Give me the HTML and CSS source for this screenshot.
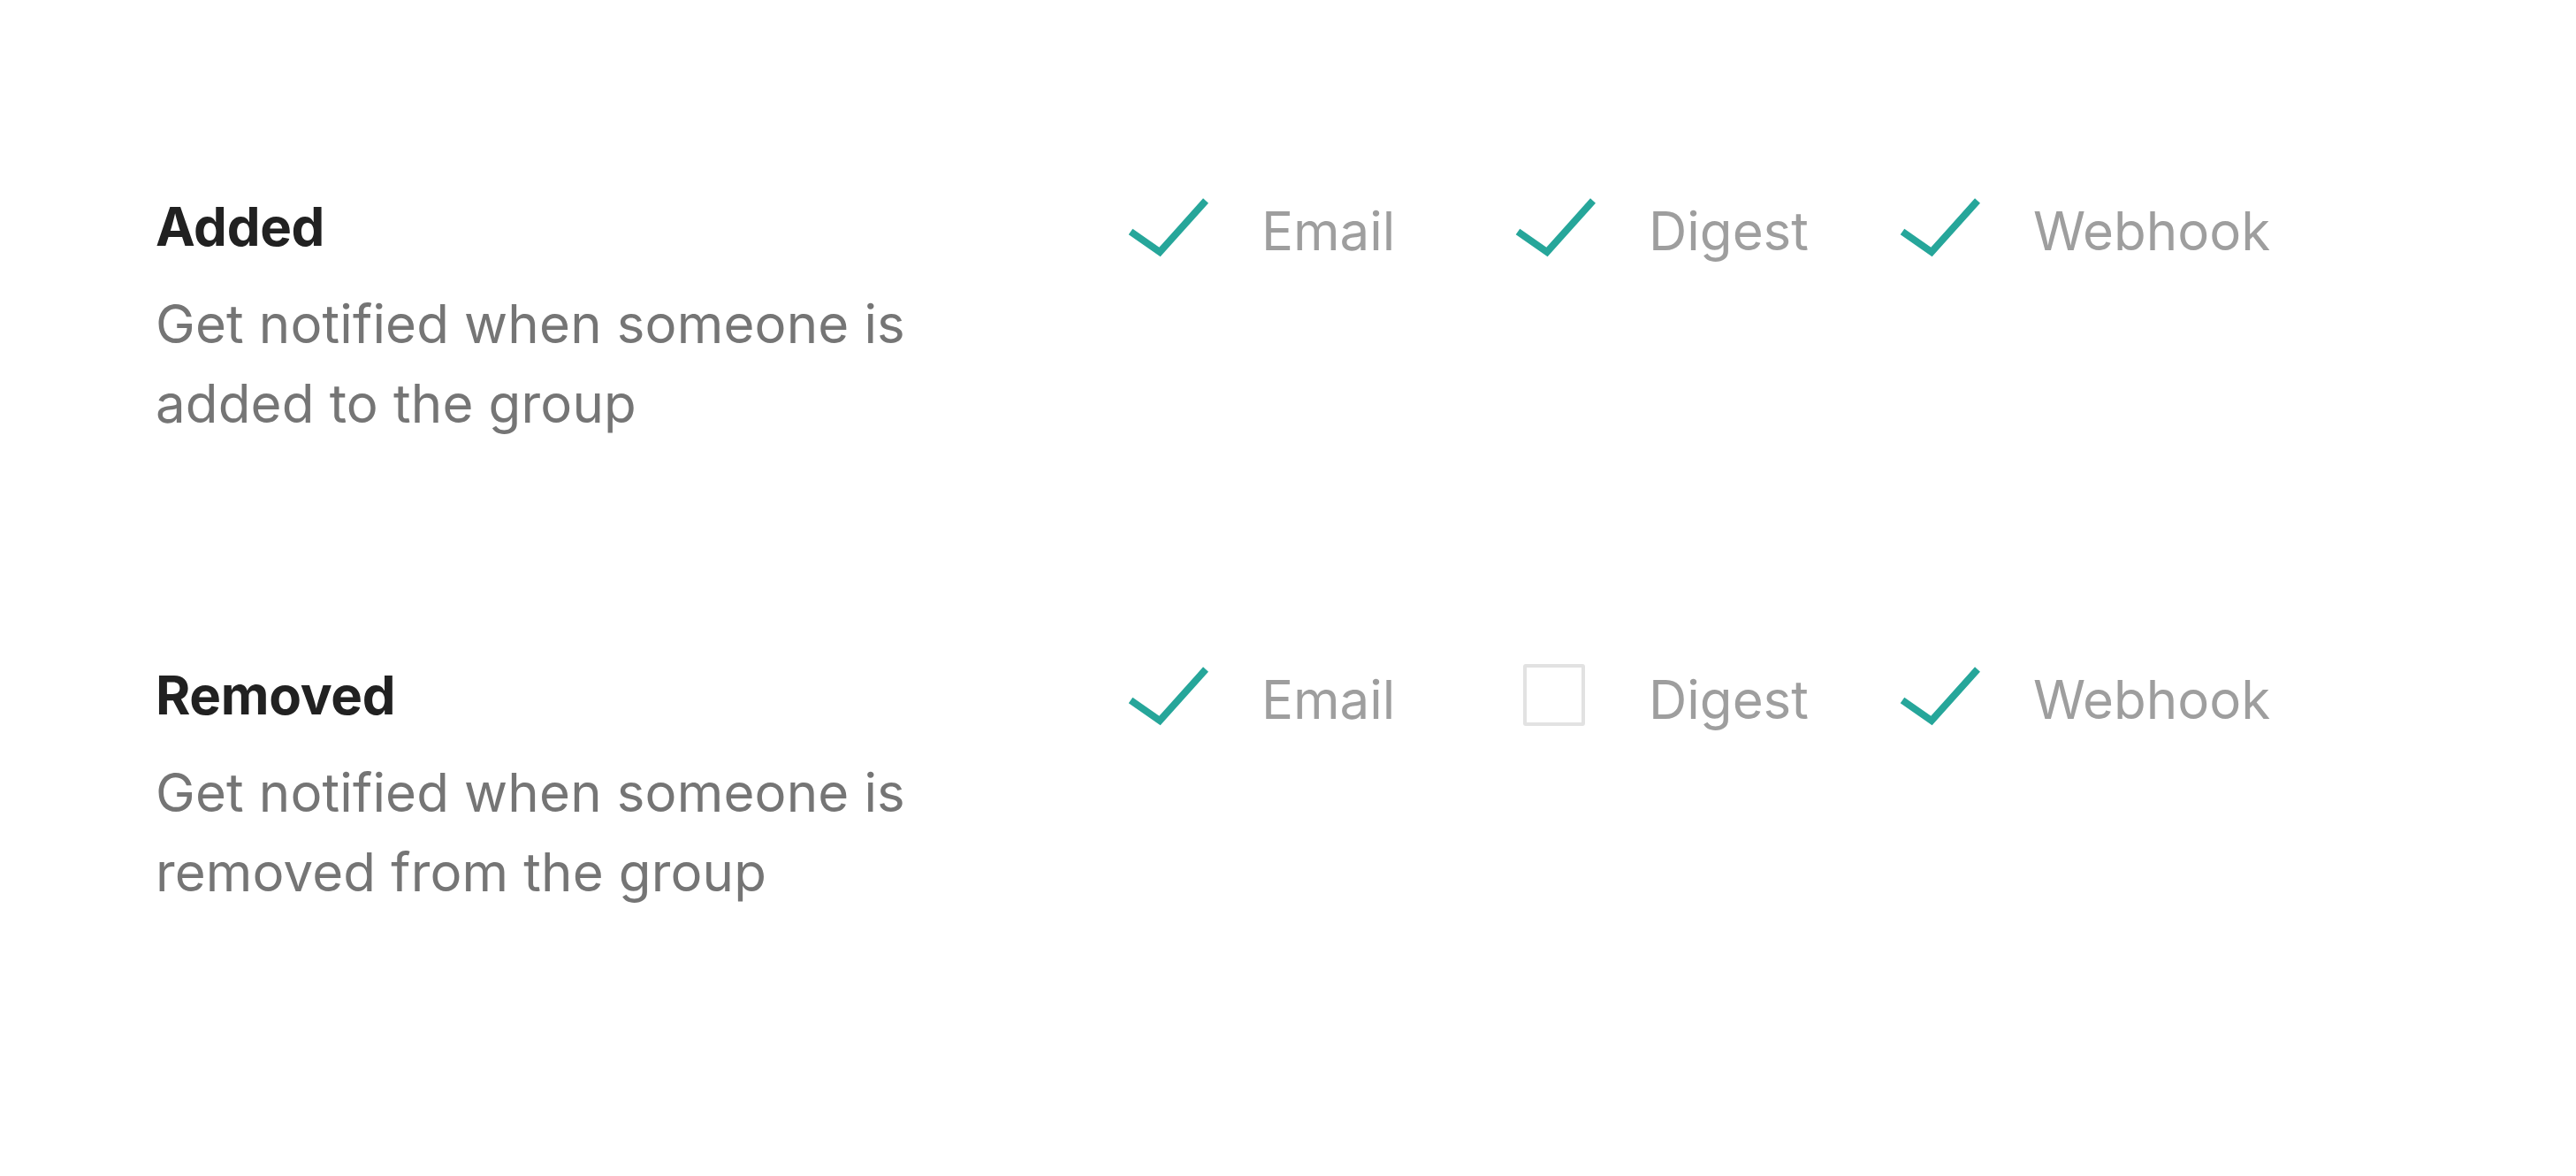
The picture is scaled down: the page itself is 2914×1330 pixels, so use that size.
FILE: index.html
```html
<!DOCTYPE html>
<html>
<head>
<meta charset="utf-8">
<link rel="stylesheet" href="styles.css">
</head>
<body>
<main class="settings">
  <section class="row">
    <div class="info">
      <div class="title">Added</div>
      <p class="desc">Get notified when someone is added to the group</p>
    </div>
    <div class="options">
      <label class="opt"><span class="box checked"><svg viewBox="0 0 70 70"><polyline points="-6,41 27,64 79,6"/></svg></span><span class="lbl">Email</span></label>
      <label class="opt"><span class="box checked"><svg viewBox="0 0 70 70"><polyline points="-6,41 27,64 79,6"/></svg></span><span class="lbl">Digest</span></label>
      <label class="opt"><span class="box checked"><svg viewBox="0 0 70 70"><polyline points="-6,41 27,64 79,6"/></svg></span><span class="lbl">Webhook</span></label>
    </div>
  </section>
  <section class="row">
    <div class="info">
      <div class="title">Removed</div>
      <p class="desc">Get notified when someone is removed from the group</p>
    </div>
    <div class="options">
      <label class="opt"><span class="box checked"><svg viewBox="0 0 70 70"><polyline points="-6,41 27,64 79,6"/></svg></span><span class="lbl">Email</span></label>
      <label class="opt"><span class="box empty"></span><span class="lbl">Digest</span></label>
      <label class="opt"><span class="box checked"><svg viewBox="0 0 70 70"><polyline points="-6,41 27,64 79,6"/></svg></span><span class="lbl">Webhook</span></label>
    </div>
  </section>
</main>
</body>
</html>
```
FILE: styles.css
```css
html, body {
  margin: 0;
  padding: 0;
  background: #ffffff;
}
body {
  font-family: Inter, "Liberation Sans", sans-serif;
  font-size: 60px;
  line-height: 90px;
}
.settings {
  padding: 211px 0 0 176px;
  display: flex;
  flex-direction: column;
  gap: 240px;
}
.row {
  display: grid;
  grid-template-columns: 1109px auto;
}
.info {
  display: flex;
  flex-direction: column;
  gap: 20px;
}
.title {
  font-weight: 700;
  color: #212121;
  letter-spacing: -0.3px;
}
.desc {
  margin: 0;
  color: #757575;
  max-width: 900px;
  letter-spacing: 0.15px;
}
.options {
  display: grid;
  grid-template-columns: 438px 435px auto;
  align-items: start;
}
.opt {
  display: flex;
  align-items: flex-start;
  padding-top: 5px;
}
.box {
  width: 70px;
  height: 70px;
  margin-top: 5px;
  margin-right: 72px;
  flex: none;
  box-sizing: border-box;
}
.box svg {
  width: 70px;
  height: 70px;
  overflow: visible;
  display: block;
}
.box svg polyline {
  fill: none;
  stroke: #26a69a;
  stroke-width: 8;
  stroke-linecap: butt;
  stroke-linejoin: miter;
}
.box.empty {
  border: 4px solid #e2e2e2;
  border-radius: 3px;
}
.lbl {
  color: #9e9e9e;
}
```
